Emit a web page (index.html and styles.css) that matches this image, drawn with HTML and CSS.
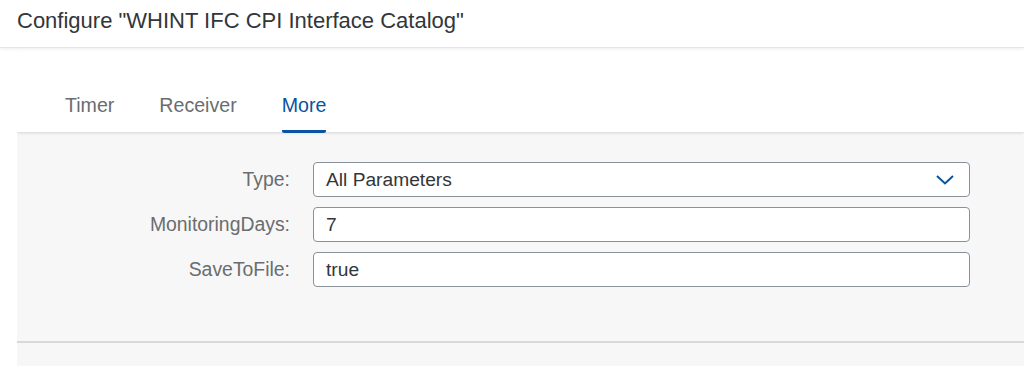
FILE: index.html
```html
<!DOCTYPE html>
<html lang="en">
<head>
  <meta charset="UTF-8" />
  <title>Configure Integration</title>
  <meta name="viewport" content="width=device-width, initial-scale=1" />
  <link rel="stylesheet" href="styles.css">
</head>
<body>

  <header class="dialog-header">
    <h1>Configure "WHINT IFC CPI Interface Catalog"</h1>
  </header>

  <div class="content">
    <nav class="tabs">
      <div class="tab">Timer</div>
      <div class="tab">Receiver</div>
      <div class="tab active">More</div>
    </nav>

    <section class="panel">
      <form class="form">
        <label class="label">Type:</label>
        <div class="field select">
          <span>All Parameters</span>
          <svg class="chevron" width="18" height="10" viewBox="0 0 18 10">
            <polyline points="1,1 9,8.5 17,1" fill="none" stroke="#0854a0" stroke-width="2" />
          </svg>
        </div>

        <label class="label">MonitoringDays:</label>
        <div class="field">7</div>

        <label class="label">SaveToFile:</label>
        <div class="field">true</div>
      </form>
    </section>

    <div class="footer-bar"></div>
  </div>

</body>
</html>
```

FILE: styles.css
```css
:root {
  --blue: #0854a0;
  --grey-bg: #f7f7f7;
  --label: #6a6d70;
  --text: #32363a;
  --border: #89919a;
}

* {
  box-sizing: border-box;
}

body {
  margin: 0;
  padding: 0;
  background: #fff;
  color: var(--text);
  font-family: 'Liberation Sans', Arial, sans-serif;
}

.dialog-header {
  height: 48px;
  padding: 8px 17px 0;
  background: #fff;
  border-bottom: 1px solid #e4e4e4;
  box-shadow: 0 1px 3px rgba(0, 0, 0, 0.08);
  position: relative;
  z-index: 2;
}

.dialog-header h1 {
  margin: 0;
  font-size: 22px;
  line-height: 25px;
  font-weight: normal;
  color: var(--text);
}

.content {
  margin-left: 17px;
}

.tabs {
  height: 85px;
  display: flex;
  align-items: flex-end;
  gap: 45px;
  padding-left: 48px;
  background: #fff;
  border-bottom: 1px solid #e2e2e2;
  box-shadow: 0 2px 2px -1px rgba(0, 0, 0, 0.08);
  position: relative;
  z-index: 1;
}

.tab {
  font-size: 19.6px;
  line-height: 22px;
  color: var(--label);
  padding-bottom: 14px;
  border-bottom: 3px solid transparent;
  margin-bottom: -1px;
}

.tab.active {
  color: var(--blue);
  border-bottom-color: var(--blue);
  border-radius: 2px;
}

.panel {
  height: 208px;
  background: var(--grey-bg);
  padding: 29px 54px 0 0;
}

.form {
  display: grid;
  grid-template-columns: 273px 1fr;
  column-gap: 23px;
  row-gap: 10px;
  align-items: center;
}

.label {
  text-align: right;
  font-size: 19.4px;
  color: var(--label);
}

.field {
  height: 35px;
  display: flex;
  align-items: center;
  padding: 0 15px 0 12px;
  background: #fff;
  border: 1px solid var(--border);
  border-radius: 4px;
  font-size: 19.2px;
  color: var(--text);
}

.select {
  justify-content: space-between;
}

.footer-bar {
  height: 25px;
  background: var(--grey-bg);
  border-top: 2px solid #d9d9d9;
}
```
